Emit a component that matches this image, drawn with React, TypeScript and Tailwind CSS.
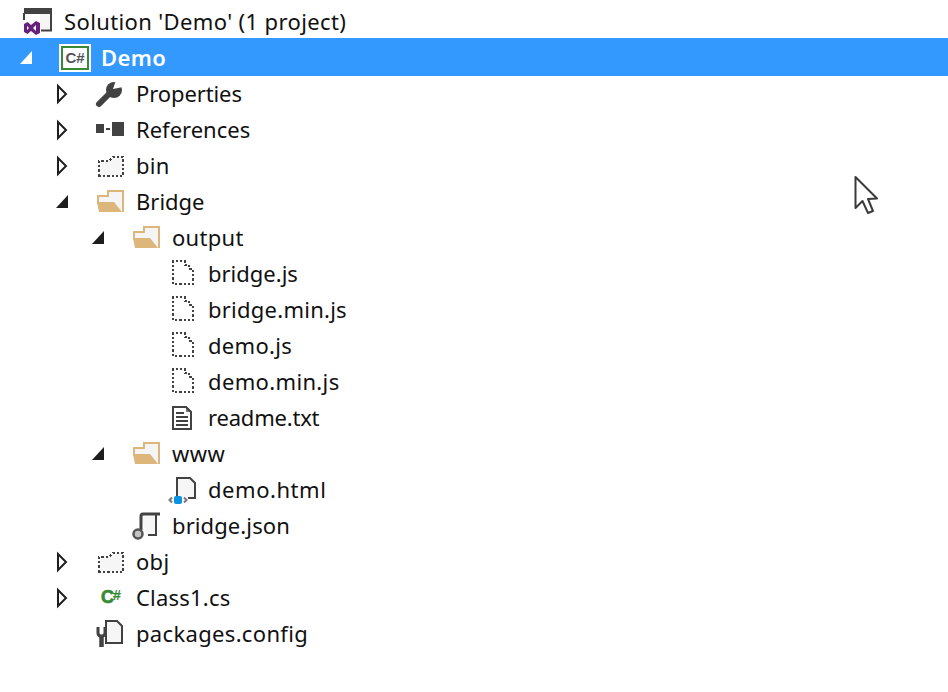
import type { ReactNode } from "react";

const DARK = "#424242";
const TAN = "#dcb67a";
const GREEN = "#388a34";

function Svg({ children, className = "" }: { children?: ReactNode; className?: string }) {
  return (
    <svg viewBox="0 0 36 36" className={`w-9 h-9 shrink-0 ${className}`}>
      {children}
    </svg>
  );
}

// collapsed / expanded tree arrows
function Expander({ kind }: { kind: "open" | "closed" | "none" | "openWhite" }) {
  if (kind === "none") return <Svg />;
  if (kind === "closed")
    return (
      <Svg>
        <path d="M7 10 L15 18 L7 26 Z" fill="#fff" stroke="#1e1e1e" strokeWidth="2" />
      </Svg>
    );
  const fill = kind === "openWhite" ? "#fff" : "#1e1e1e";
  return (
    <Svg>
      <polygon points="17,11 17,24 5,24" fill={fill} />
    </Svg>
  );
}

const SolutionIcon = () => (
  <Svg>
    <path d="M4 4 H32 V27 H20 V10 H4 Z" fill="#f6f6f6" />
    <rect x="4" y="4" width="28" height="6" fill={DARK} />
    <path d="M31 9 V26.5 H21" fill="none" stroke={DARK} strokeWidth="2" />
    <path d="M4 9 V16" stroke={DARK} strokeWidth="2" />
    <path
      d="M16 17 L20 19 V29 L16 31 L11 27 L7.5 30 L4 28 V20 L7.5 18 L11 21 Z M16 21 L13 24 L16 27 Z M7 22 V26 L9 24 Z"
      fill="#68217a"
      fillRule="evenodd"
    />
  </Svg>
);

const ProjectIcon = () => (
  <Svg>
    <rect x="3" y="4" width="32" height="28" fill="#fff" />
    <rect x="6" y="7" width="26" height="22" fill="#fff" stroke={GREEN} strokeWidth="2" />
    <text x="19" y="23" textAnchor="middle" fontSize="15" fontWeight="700" fill="#555" fontFamily="'Liberation Sans', sans-serif">
      C#
    </text>
  </Svg>
);

const WrenchIcon = () => (
  <Svg>
    <path d="M7 28 L18 17" stroke={DARK} strokeWidth="6" strokeLinecap="round" />
    <circle cx="22" cy="14" r="8" fill={DARK} />
    <polygon points="21,13 24,4 34,4 31,11" fill="#fff" />
  </Svg>
);

const ReferencesIcon = () => (
  <Svg>
    <rect x="4" y="12" width="8" height="9" fill={DARK} />
    <rect x="14" y="16" width="4" height="2" fill={DARK} />
    <rect x="20" y="10" width="12" height="14" fill={DARK} />
  </Svg>
);

const DottedFolder = () => (
  <Svg>
    <path
      d="M7 28 V13 H17 L21 9 H31 V28 Z"
      fill="#f6f6f6"
      stroke={DARK}
      strokeWidth="2.4"
      strokeDasharray="2.3 2"
      shapeRendering="crispEdges"
    />
  </Svg>
);

const OpenFolder = () => (
  <Svg>
    <path d="M6 20 V12 H16 V7 H31 V28" fill="#f5f5f5" stroke={TAN} strokeWidth="2" />
    <polygon points="5,18 22,18 30,28 7,28" fill={TAN} />
  </Svg>
);

const DottedFile = () => (
  <Svg>
    <path
      d="M9 28 V5 H21 V9 H25 V13 H29 V28 Z"
      fill="#fff"
      stroke={DARK}
      strokeWidth="2.4"
      strokeDasharray="2.3 2"
      shapeRendering="crispEdges"
    />
  </Svg>
);

const TextFile = () => (
  <Svg>
    <path d="M9 7 H22 L27 12 V29 H9 Z" fill="#fff" stroke={DARK} strokeWidth="2" />
    <polygon points="22,6 28,12 22,12" fill={DARK} opacity="0.7" />
    <path d="M12 13 H20 M12 17 H24 M12 21 H24 M12 25 H24" stroke={DARK} strokeWidth="2" />
  </Svg>
);

const HtmlFile = () => (
  <Svg>
    <path d="M13 24 V6 H26 L31 11 V26 H24" fill="#f6f6f6" stroke={DARK} strokeWidth="2" />
    <rect x="10" y="24" width="8" height="8" rx="2" fill="#0a93e0" />
    <path d="M8 25.5 L5.5 28 L8 30.5 M20 25.5 L22.5 28 L20 30.5" fill="none" stroke="#777" strokeWidth="2" />
  </Svg>
);

const JsonFile = () => (
  <Svg>
    <path d="M14 8 H28 V27 H18 Z" fill="#f6f6f6" />
    <path d="M13 22 V8 Q13 6 15 6 H32" fill="none" stroke={DARK} strokeWidth="3" />
    <path d="M28 7 V27 H20" fill="none" stroke={DARK} strokeWidth="2" />
    <circle cx="10" cy="26" r="4.5" fill="#c4c4c4" stroke="#555" strokeWidth="2.5" />
  </Svg>
);

const CsFile = () => (
  <Svg>
    <text y="23" fontSize="18" fontWeight="700" fill={GREEN} stroke={GREEN} strokeWidth="0.7" fontFamily="'Liberation Sans', sans-serif">
      <tspan x="9">C</tspan>
      <tspan x="21" y="19.5" fontSize="14" strokeWidth="0.2">#</tspan>
    </text>
  </Svg>
);

const ConfigFile = () => (
  <Svg>
    <path d="M14 5 H25 L30 10 V27 H14 Z" fill="#f6f6f6" stroke={DARK} strokeWidth="2" />
    <path d="M6 11 V17 Q6 20 9.5 20 Q13 20 13 17 V11" fill="none" stroke={DARK} strokeWidth="3" />
    <path d="M9.5 20 V31" stroke={DARK} strokeWidth="4.5" />
  </Svg>
);

const indent = ["pl-[15px]", "pl-[51px]", "pl-[87px]", "pl-[123px]"];

function Row({
  depth,
  arrow,
  icon,
  label,
  spacing = "",
}: {
  depth: number;
  arrow: "open" | "closed" | "none";
  icon: ReactNode;
  label: string;
  spacing?: string;
}) {
  return (
    <div className={`flex items-center h-9 ${indent[depth]}`}>
      <Expander kind={arrow} />
      <span className="ml-[5px] mr-[8px] flex">{icon}</span>
      <span className={`text-[22px] leading-9 pb-[2px] whitespace-nowrap text-[#111] ${spacing}`}>{label}</span>
    </div>
  );
}

export default function App() {
  return (
    <div className="relative w-[948px] h-[692px] bg-white overflow-hidden pt-1 font-['Noto_Sans',sans-serif]">
      <div className="flex items-center h-9 pl-5">
        <SolutionIcon />
        <span className="ml-2 text-[22px] leading-9 pb-[2px] whitespace-nowrap text-[#111] tracking-[0.37px]">
          Solution 'Demo' (1 project)
        </span>
      </div>
      <div className="flex items-center h-[38px] -mt-[2px] pt-[2px] pl-[15px] bg-[#3399ff]">
        <Expander kind="openWhite" />
        <span className="ml-[5px] mr-[9px] flex">
          <ProjectIcon />
        </span>
        <span className="text-[22px] font-semibold leading-9 pb-[2px] text-white tracking-[0.4px]">Demo</span>
      </div>
      <Row depth={1} arrow="closed" icon={<WrenchIcon />} label="Properties" spacing="tracking-[-0.1px]" />
      <Row depth={1} arrow="closed" icon={<ReferencesIcon />} label="References" />
      <Row depth={1} arrow="closed" icon={<DottedFolder />} label="bin" spacing="tracking-[0.3px]" />
      <Row depth={1} arrow="open" icon={<OpenFolder />} label="Bridge" />
      <Row depth={2} arrow="open" icon={<OpenFolder />} label="output" spacing="tracking-[0.3px]" />
      <Row depth={3} arrow="none" icon={<DottedFile />} label="bridge.js" />
      <Row depth={3} arrow="none" icon={<DottedFile />} label="bridge.min.js" spacing="tracking-[0.25px]" />
      <Row depth={3} arrow="none" icon={<DottedFile />} label="demo.js" spacing="tracking-[0.3px]" />
      <Row depth={3} arrow="none" icon={<DottedFile />} label="demo.min.js" spacing="tracking-[0.35px]" />
      <Row depth={3} arrow="none" icon={<TextFile />} label="readme.txt" spacing="tracking-[-0.2px]" />
      <Row depth={2} arrow="open" icon={<OpenFolder />} label="www" spacing="tracking-[0.5px]" />
      <Row depth={3} arrow="none" icon={<HtmlFile />} label="demo.html" spacing="tracking-[0.55px]" />
      <Row depth={2} arrow="none" icon={<JsonFile />} label="bridge.json" spacing="tracking-[0.1px]" />
      <Row depth={1} arrow="closed" icon={<DottedFolder />} label="obj" spacing="tracking-[0.3px]" />
      <Row depth={1} arrow="closed" icon={<CsFile />} label="Class1.cs" spacing="tracking-[0.2px]" />
      <Row depth={1} arrow="none" icon={<ConfigFile />} label="packages.config" spacing="tracking-[0.33px]" />

      {/* mouse pointer sits over the page */}
      <svg viewBox="0 0 30 44" className="absolute left-[850px] top-[173px] w-[30px] h-[44px]">
        <path
          d="M5.5 4 V35 L12.5 28 L18 40 L23 38 L18 26 L27 25.5 Z"
          fill="#fff"
          stroke="#3a3a3a"
          strokeWidth="2"
          strokeLinejoin="round"
        />
      </svg>
    </div>
  );
}
